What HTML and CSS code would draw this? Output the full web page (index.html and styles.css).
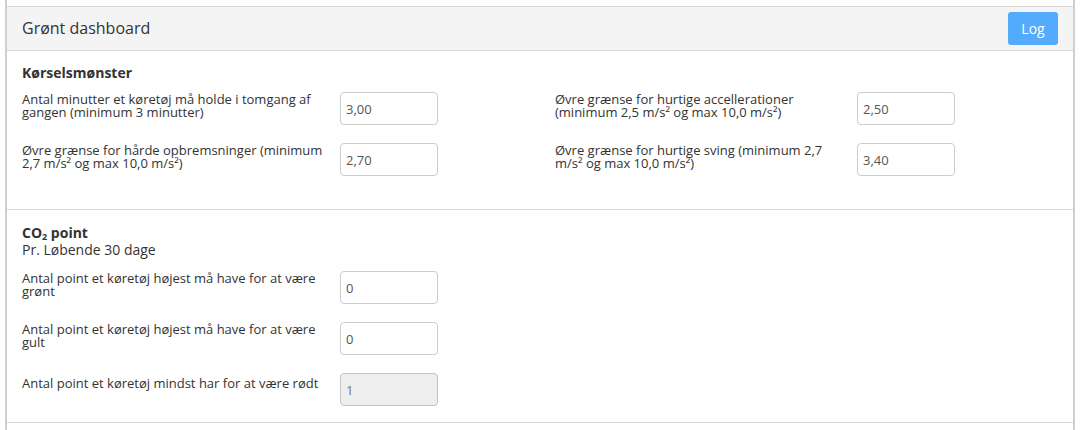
FILE: index.html
```html
<!DOCTYPE html>
<html lang="da">
<head>
<meta charset="utf-8">
<title>Grønt dashboard</title>
<link rel="stylesheet" href="styles.css">
</head>
<body>
<div class="frame">
  <div class="panel">
    <div class="panel-head">
      <h1 class="panel-title">Grønt dashboard</h1>
      <button class="btn-log" type="button">Log</button>
    </div>

    <section class="section section-driving">
      <h2 class="section-title">Kørselsmønster</h2>
      <div class="cols">
        <div class="col col-left">
          <div class="field">
            <label class="field-label">Antal minutter et køretøj må holde i tomgang af gangen (minimum 3 minutter)</label>
            <input class="field-input" type="text" value="3,00">
          </div>
          <div class="field">
            <label class="field-label">Øvre grænse for hårde opbremsninger (minimum 2,7 m/s² og max 10,0 m/s²)</label>
            <input class="field-input" type="text" value="2,70">
          </div>
        </div>
        <div class="col col-right">
          <div class="field">
            <label class="field-label">Øvre grænse for hurtige accellerationer (minimum 2,5 m/s² og max 10,0 m/s²)</label>
            <input class="field-input" type="text" value="2,50">
          </div>
          <div class="field">
            <label class="field-label">Øvre grænse for hurtige sving (minimum 2,7 m/s² og max 10,0 m/s²)</label>
            <input class="field-input" type="text" value="3,40">
          </div>
        </div>
      </div>
    </section>

    <section class="section section-co2">
      <h2 class="section-title">CO<sub class="sub">2</sub> point</h2>
      <p class="section-sub">Pr. Løbende 30 dage</p>
      <div class="col col-left">
        <div class="field">
          <label class="field-label">Antal point et køretøj højest må have for at være grønt</label>
          <input class="field-input" type="text" value="0">
        </div>
        <div class="field">
          <label class="field-label">Antal point et køretøj højest må have for at være gult</label>
          <input class="field-input" type="text" value="0">
        </div>
        <div class="field">
          <label class="field-label field-label-single">Antal point et køretøj mindst har for at være rødt</label>
          <input class="field-input" type="text" value="1" disabled>
        </div>
      </div>
    </section>
  </div>
</div>
</body>
</html>
```

FILE: styles.css
```css
* { box-sizing: border-box; }

html, body {
  margin: 0;
  padding: 0;
  background: #ffffff;
}

body {
  font-family: "Open Sans", "Liberation Sans", sans-serif;
  color: #333333;
}

.frame {
  margin-left: 5px;
  width: 1070px;
  min-height: 100vh;
  padding-top: 6px;
  border-left: 2px solid #cfcfcf;
  border-right: 2px solid #cfcfcf;
}

.panel {
  border-top: 1px solid #d6d6d6;
  border-bottom: 1px solid #d6d6d6;
  background: #ffffff;
}

.panel-head {
  display: flex;
  align-items: center;
  justify-content: space-between;
  height: 44px;
  padding: 0 15px;
  background: #f4f4f4;
  border-bottom: 1px solid #dadada;
}

.panel-title {
  margin: 0;
  font-size: 16px;
  font-weight: 400;
  line-height: 20px;
  color: #333333;
  margin-top: -1px;
}

.btn-log {
  width: 50px;
  height: 33px;
  border: 0;
  border-radius: 3px;
  background: #54abfd;
  color: #ffffff;
  font-family: inherit;
  font-size: 14px;
  padding: 0;
  margin-right: 0;
}

.section {
  padding: 13px 15px 15px;
}

.section-driving {
  padding-bottom: 33px;
  border-bottom: 1px solid #d9d9d9;
}

.section-co2 {
  padding-top: 14px;
  padding-bottom: 16px;
}

.section-title {
  margin: 0;
  font-size: 14px;
  font-weight: 700;
  line-height: 17px;
  color: #333333;
}

.sub {
  font-size: 9px;
  line-height: 0;
  vertical-align: -2px;
}

.section-sub {
  margin: 0;
  font-size: 14px;
  line-height: 17px;
}

.section-driving .cols {
  margin-top: 11px;
}

.section-co2 .col {
  margin-top: 13px;
}

.cols {
  display: grid;
  grid-template-columns: 518px 1fr;
  column-gap: 15px;
}

.col {
  display: flex;
  flex-direction: column;
  gap: 18px;
}

.field {
  display: grid;
  grid-template-columns: 303px 98px;
  column-gap: 15px;
  align-items: start;
}

.col-right .field {
  grid-template-columns: 287px 98px;
}

.field-label {
  font-size: 13px;
  line-height: 13px;
  padding-top: 1px;
  color: #333333;
}

.field-label-single {
  padding-top: 4px;
}

.field-input {
  width: 98px;
  height: 33px;
  border: 1px solid #cccccc;
  border-radius: 4px;
  padding: 0 5px;
  font-family: inherit;
  font-size: 13px;
  color: #555555;
  background: #ffffff;
}

.field-input:disabled {
  background: #eeeeee;
  border-color: #c4c4c4;
  color: #777777;
}
```
